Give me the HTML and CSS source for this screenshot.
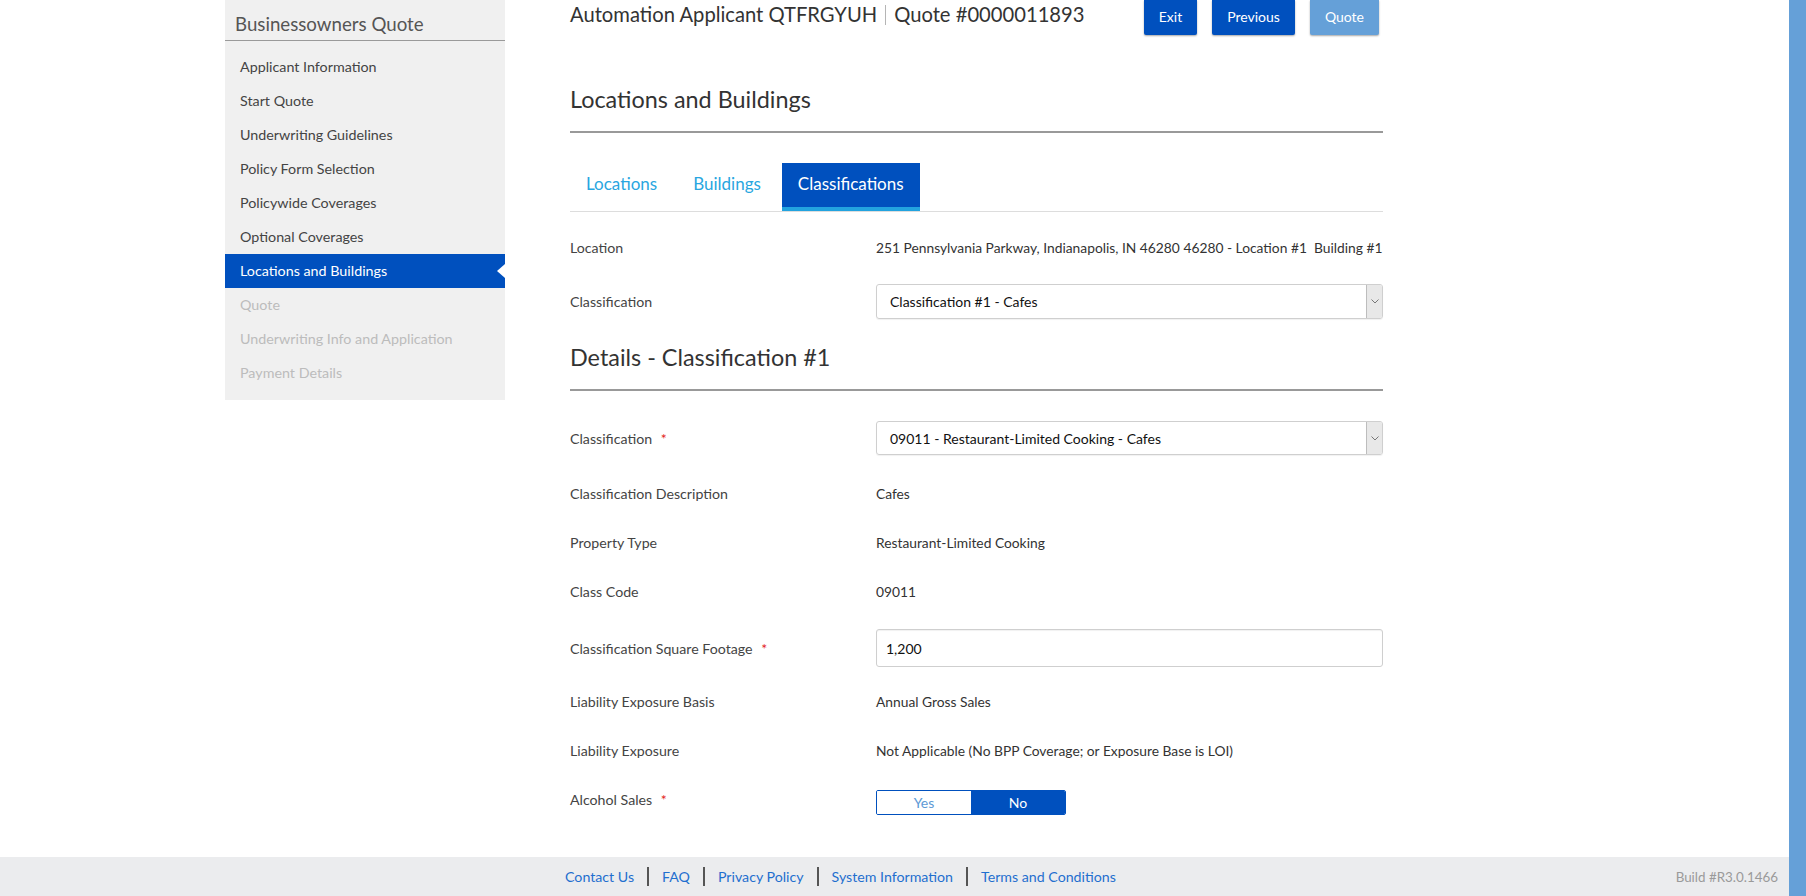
FILE: index.html
```html
<!DOCTYPE html>
<html lang="en">
<head>
<meta charset="utf-8">
<title>Businessowners Quote</title>
<link rel="stylesheet" href="styles.css">
</head>
<body>
<div class="screen">
  <div class="page">
    <div class="main">
      <aside class="sidebar">
        <div class="side-title">Businessowners Quote</div>
        <ul class="nav">
          <li>Applicant Information</li>
          <li>Start Quote</li>
          <li>Underwriting Guidelines</li>
          <li>Policy Form Selection</li>
          <li>Policywide Coverages</li>
          <li>Optional Coverages</li>
          <li class="active">Locations and Buildings</li>
          <li class="disabled">Quote</li>
          <li class="disabled">Underwriting Info and Application</li>
          <li class="disabled">Payment Details</li>
        </ul>
      </aside>
      <section class="content">
        <div class="topbar">
          <h1 class="quote-title"><span>Automation Applicant QTFRGYUH</span><span class="title-sep"></span><span>Quote #0000011893</span></h1>
          <div class="actions">
            <button class="btn">Exit</button>
            <button class="btn">Previous</button>
            <button class="btn btn-disabled">Quote</button>
          </div>
        </div>
        <h2 class="section-title">Locations and Buildings</h2>
        <div class="tabs">
          <span class="tab">Locations</span>
          <span class="tab">Buildings</span>
          <span class="tab tab-active">Classifications</span>
        </div>
        <div class="row row-text row-location">
          <span class="label">Location</span>
          <span class="value">251 Pennsylvania Parkway, Indianapolis, IN 46280 46280 - Location #1&nbsp; Building #1</span>
        </div>
        <div class="row row-select-top">
          <span class="label">Classification</span>
          <div class="select"><span class="select-text">Classification #1 - Cafes</span><span class="select-arrow"><svg width="8" height="5" viewBox="0 0 8 5"><path d="M0.5 0.5 L4 4 L7.5 0.5" fill="none" stroke="#777" stroke-width="1"/></svg></span></div>
        </div>
        <h2 class="section-title section-title-2">Details - Classification #1</h2>
        <div class="row row-select">
          <span class="label">Classification <span class="req">*</span></span>
          <div class="select"><span class="select-text">09011 - Restaurant-Limited Cooking - Cafes</span><span class="select-arrow"><svg width="8" height="5" viewBox="0 0 8 5"><path d="M0.5 0.5 L4 4 L7.5 0.5" fill="none" stroke="#777" stroke-width="1"/></svg></span></div>
        </div>
        <div class="row row-text row-first">
          <span class="label">Classification Description</span>
          <span class="value">Cafes</span>
        </div>
        <div class="row row-text">
          <span class="label">Property Type</span>
          <span class="value">Restaurant-Limited Cooking</span>
        </div>
        <div class="row row-text">
          <span class="label">Class Code</span>
          <span class="value">09011</span>
        </div>
        <div class="row row-input">
          <span class="label">Classification Square Footage <span class="req">*</span></span>
          <div class="input">1,200</div>
        </div>
        <div class="row row-text row-after-input">
          <span class="label">Liability Exposure Basis</span>
          <span class="value">Annual Gross Sales</span>
        </div>
        <div class="row row-text">
          <span class="label">Liability Exposure</span>
          <span class="value">Not Applicable (No BPP Coverage; or Exposure Base is LOI)</span>
        </div>
        <div class="row row-text">
          <span class="label">Alcohol Sales <span class="req">*</span></span>
          <div class="toggle"><span class="toggle-opt">Yes</span><span class="toggle-opt toggle-on">No</span></div>
        </div>
      </section>
    </div>
    <footer class="footer">
      <nav class="footer-links">
        <a class="flink">Contact Us</a><span class="fsep"></span>
        <a class="flink">FAQ</a><span class="fsep"></span>
        <a class="flink">Privacy Policy</a><span class="fsep"></span>
        <a class="flink">System Information</a><span class="fsep"></span>
        <a class="flink">Terms and Conditions</a>
      </nav>
      <span class="build">Build #R3.0.1466</span>
    </footer>
  </div>
  <div class="scrollbar"></div>
</div>
</body>
</html>
```

FILE: styles.css
```css
html, body {
  margin: 0;
  padding: 0;
}
body {
  font-family: Lato, "Noto Sans", sans-serif;
  color: #333;
  background: #fff;
  width: 1806px;
  height: 896px;
  overflow: hidden;
}
.screen {
  display: flex;
  height: 896px;
}
.page {
  flex: 1;
  display: flex;
  flex-direction: column;
  min-width: 0;
}
.scrollbar {
  width: 17px;
  background: #65a0d8;
}
.main {
  flex: 1;
  display: flex;
  align-items: flex-start;
  padding-left: 225px;
}

/* Sidebar */
.sidebar {
  width: 280px;
  background: #f0f0f0;
  padding-bottom: 10px;
}
.side-title {
  font-size: 18.7px;
  line-height: 24px;
  color: #555;
  padding: 12px 10px 4px;
  border-bottom: 1px solid #9a9a9a;
}
.nav {
  list-style: none;
  margin: 9px 0 0;
  padding: 0;
}
.nav li {
  height: 34px;
  line-height: 34px;
  font-size: 14.3px;
  color: #444;
  padding-left: 15px;
  position: relative;
}
.nav li.active {
  background: #0050be;
  color: #fff;
}
.nav li.active::after {
  content: "";
  position: absolute;
  right: 0;
  top: 10px;
  border-right: 8px solid #fff;
  border-top: 7px solid transparent;
  border-bottom: 7px solid transparent;
}
.nav li.disabled {
  color: #bcbcbc;
}

/* Content */
.content {
  width: 813px;
  margin-left: 65px;
}
.topbar {
  display: flex;
  justify-content: space-between;
  align-items: flex-start;
  height: 35px;
}
.quote-title {
  margin: 0;
  padding-top: 2px;
  font-size: 20.2px;
  line-height: 25px;
  font-weight: 400;
  color: #333;
  display: flex;
  align-items: center;
}
.title-sep {
  display: inline-block;
  width: 1px;
  height: 20px;
  background: #b5b5b5;
  margin: 0 8px;
}
.actions {
  display: flex;
  gap: 15px;
  margin-right: 4px;
}
.btn {
  height: 35px;
  padding: 0 15px 2px;
  border: 0;
  border-radius: 0 0 2px 2px;
  background: #0050be;
  color: #fff;
  font-family: inherit;
  font-size: 14px;
  box-shadow: 0 1px 2px rgba(0, 0, 0, 0.35);
}
.btn-disabled {
  background: #65a0d8;
}
.section-title {
  margin: 51px 0 0;
  font-size: 23.4px;
  line-height: 26px;
  font-weight: 400;
  color: #333;
  padding-bottom: 19px;
  border-bottom: 2px solid #999;
}
.section-title-2 {
  margin-top: 25px;
}

/* Tabs */
.tabs {
  display: flex;
  gap: 5px;
  margin-top: 30px;
  border-bottom: 1px solid #ddd;
}
.tab {
  height: 48px;
  line-height: 41px;
  padding: 0 16px;
  font-size: 17px;
  color: #29a6e0;
  box-sizing: border-box;
}
.tab:first-child {
  margin-right: -1px;
}
.tab-active {
  background: #0050be;
  color: #fff;
  border-bottom: 4px solid #22a3df;
}

/* Rows */
.row {
  display: flex;
  align-items: center;
  font-size: 14.2px;
}
.label {
  width: 306px;
  flex: none;
  color: #444;
}
.value {
  color: #333;
  font-size: 13.8px;
  white-space: nowrap;
}
.req {
  color: #e21b1b;
  margin-left: 5px;
}
.row-text {
  height: 49px;
}
.row-location {
  height: 70px;
}
.row-select-top {
  margin-top: 2px;
  height: 35px;
}
.row-select {
  margin-top: 30px;
  height: 34px;
}
.row-first {
  margin-top: 14px;
}
.row-input {
  margin-top: 13px;
  height: 38px;
}
.row-after-input {
  margin-top: 10px;
}
.select {
  flex: 1;
  align-self: stretch;
  display: flex;
  border: 1px solid #cfcfcf;
  border-radius: 3px;
  box-shadow: 0 1px 1px rgba(0, 0, 0, 0.06);
  overflow: hidden;
}
.select-text {
  flex: 1;
  display: flex;
  align-items: center;
  padding-left: 13px;
  font-size: 14px;
  color: #111;
}
.select-arrow {
  width: 15px;
  background: #e8e8e8;
  border-left: 1px solid #bdbdbd;
  display: flex;
  align-items: center;
  justify-content: center;
}
.input {
  flex: 1;
  align-self: stretch;
  display: flex;
  align-items: center;
  padding-left: 9px;
  border: 1px solid #cfcfcf;
  border-radius: 3px;
  box-shadow: inset 0 1px 1px rgba(0, 0, 0, 0.06);
  font-size: 14px;
  color: #111;
}
.toggle {
  display: flex;
  margin-top: 6px;
  border: 1px solid #0050be;
  border-radius: 2px;
  overflow: hidden;
}
.toggle-opt {
  width: 94px;
  height: 23px;
  line-height: 23px;
  text-align: center;
  font-size: 14px;
  color: #5d9ad6;
  background: #fff;
}
.toggle-on {
  background: #0050be;
  color: #fff;
}

/* Footer */
.footer {
  height: 39px;
  flex: none;
  background: #ebecee;
  display: flex;
  align-items: center;
  justify-content: space-between;
  padding: 0 11px 0 565px;
}
.footer-links {
  display: flex;
  align-items: center;
}
.flink {
  font-size: 14.2px;
  color: #1f6fcf;
}
.fsep {
  width: 2px;
  height: 19px;
  background: #555;
  margin: 0 13px;
}
.build {
  font-size: 13.4px;
  color: #9a9a9a;
}
```
